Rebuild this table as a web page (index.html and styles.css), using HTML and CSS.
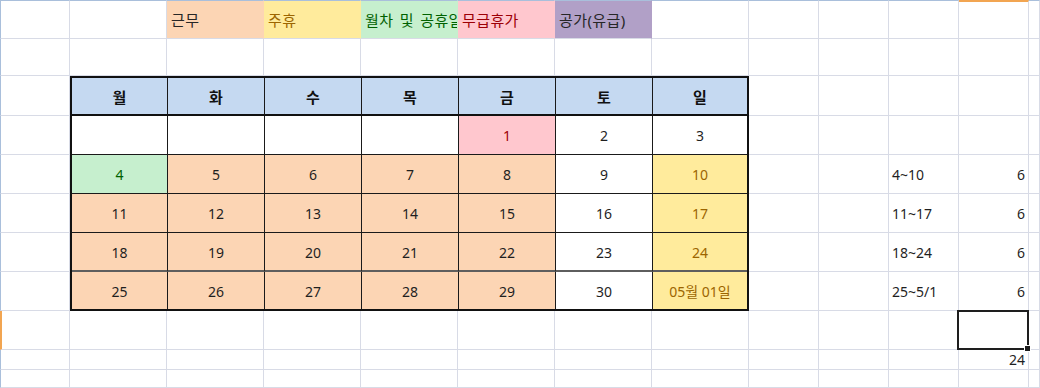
FILE: index.html
```html
<!DOCTYPE html>
<html lang="ko">
<head>
<meta charset="utf-8">
<title>근무표</title>
<link rel="stylesheet" href="styles.css">
</head>
<body>
<div class="sheet">
  <!-- row 1: legend -->
  <div class="cell top lft"></div>
  <div class="cell top"></div>
  <div class="cell top leg work">근무</div>
  <div class="cell top leg rest">주휴</div>
  <div class="cell top leg holiday">월차 및 공휴일</div>
  <div class="cell top leg unpaid">무급휴가</div>
  <div class="cell top leg official">공가(유급)</div>
  <div class="cell top"></div>
  <div class="cell top"></div>
  <div class="cell top"></div>
  <div class="cell top"></div>
  <div class="cell top active-col"></div>
  <div class="cell top"></div>

  <!-- row 2 -->
  <div class="cell lft"></div>
  <div class="cell"></div><div class="cell"></div><div class="cell"></div><div class="cell"></div>
  <div class="cell"></div><div class="cell"></div><div class="cell"></div><div class="cell"></div>
  <div class="cell"></div><div class="cell"></div><div class="cell"></div><div class="cell"></div>

  <!-- calendar table -->
  <div class="cal">
    <div class="hd">월</div><div class="hd">화</div><div class="hd">수</div><div class="hd">목</div><div class="hd">금</div><div class="hd">토</div><div class="hd">일</div>

    <div class="d"></div><div class="d"></div><div class="d"></div><div class="d"></div>
    <div class="d unpaid">1</div><div class="d">2</div><div class="d">3</div>

    <div class="d holiday">4</div><div class="d work">5</div><div class="d work">6</div><div class="d work">7</div>
    <div class="d work">8</div><div class="d">9</div><div class="d rest">10</div>

    <div class="d work">11</div><div class="d work">12</div><div class="d work">13</div><div class="d work">14</div>
    <div class="d work">15</div><div class="d">16</div><div class="d rest">17</div>

    <div class="d work">18</div><div class="d work">19</div><div class="d work">20</div><div class="d work">21</div>
    <div class="d work">22</div><div class="d">23</div><div class="d rest">24</div>

    <div class="d work">25</div><div class="d work">26</div><div class="d work">27</div><div class="d work">28</div>
    <div class="d work">29</div><div class="d">30</div><div class="d rest">05월 01일</div>
  </div>

  <!-- rows 3-8 (beside the table) -->
  <div class="cell lft"></div><div class="cell"></div><div class="cell"></div><div class="cell"></div><div class="cell"></div><div class="cell"></div>
  <div class="cell lft"></div><div class="cell"></div><div class="cell"></div><div class="cell"></div><div class="cell"></div><div class="cell"></div>
  <div class="cell lft"></div><div class="cell"></div><div class="cell"></div><div class="cell txt">4~10</div><div class="cell num">6</div><div class="cell"></div>
  <div class="cell lft"></div><div class="cell"></div><div class="cell"></div><div class="cell txt">11~17</div><div class="cell num">6</div><div class="cell"></div>
  <div class="cell lft"></div><div class="cell"></div><div class="cell"></div><div class="cell txt">18~24</div><div class="cell num">6</div><div class="cell"></div>
  <div class="cell lft"></div><div class="cell"></div><div class="cell"></div><div class="cell txt">25~5/1</div><div class="cell num">6</div><div class="cell"></div>

  <!-- row 9 (selected row) -->
  <div class="cell lft active-row"></div>
  <div class="cell"></div><div class="cell"></div><div class="cell"></div><div class="cell"></div>
  <div class="cell"></div><div class="cell"></div><div class="cell"></div><div class="cell"></div>
  <div class="cell"></div><div class="cell"></div><div class="cell selected"></div><div class="cell"></div>

  <!-- row 10 -->
  <div class="cell lft"></div>
  <div class="cell"></div><div class="cell"></div><div class="cell"></div><div class="cell"></div>
  <div class="cell"></div><div class="cell"></div><div class="cell"></div><div class="cell"></div>
  <div class="cell"></div><div class="cell"></div><div class="cell num">24</div><div class="cell"></div>

  <!-- row 11 -->
  <div class="cell lft"></div>
  <div class="cell"></div><div class="cell"></div><div class="cell"></div><div class="cell"></div>
  <div class="cell"></div><div class="cell"></div><div class="cell"></div><div class="cell"></div>
  <div class="cell"></div><div class="cell"></div><div class="cell"></div><div class="cell"></div>
</div>
</body>
</html>
```

FILE: styles.css
```css
* {
  box-sizing: border-box;
}

html, body {
  margin: 0;
  padding: 0;
  background: #ffffff;
}

body {
  width: 1040px;
  height: 388px;
  overflow: hidden;
  font-family: "Noto Sans", "Noto Sans CJK KR", sans-serif;
  font-size: 14px;
  color: #1f1f1f;
}

.sheet {
  display: grid;
  grid-template-columns: 70px repeat(7, 97px) repeat(4, 70px) 11px;
  grid-template-rows: 39px 37px 40px repeat(5, 39px) 39px 20px 18px;
  width: 1040px;
}

.cell {
  border-right: 1px solid #d8dbe6;
  border-bottom: 1px solid #d8dbe6;
  display: flex;
  align-items: center;
  white-space: nowrap;
  overflow: hidden;
  min-width: 0;
}

.cell.top {
  border-top: 1px solid #a9bfdb;
}

.cell.top.active-col {
  border-top: 2px solid #f2a551;
}

.cell.lft {
  border-left: 1px solid #a9bfdb;
}

.cell.lft.active-row {
  border-left: 2px solid #f2a551;
}

/* legend */
.leg {
  padding-left: 4px;
  padding-top: 1px;
  border-right-color: transparent;
  line-height: 1;
  font-size: 15px;
  letter-spacing: 0.4px;
  word-spacing: 2px;
}

.work {
  background: #fcd5b4;
}

.rest {
  background: #ffeb9c;
  color: #9c6500;
}

.holiday {
  background: #c6efce;
  color: #006100;
}

.unpaid {
  background: #ffc7ce;
  color: #9c0006;
}

.official {
  background: #b1a0c7;
  color: #262626;
}

.leg.work {
  color: #262626;
}

/* right side summary */
.txt {
  padding-left: 3px;
}

.num {
  justify-content: flex-end;
  padding-right: 3px;
}

/* selected cell */
.selected {
  position: relative;
  overflow: visible;
}

.selected::after {
  content: "";
  position: absolute;
  left: -2px;
  top: -1px;
  right: -1px;
  bottom: -1px;
  border: 2px solid #1e1e1e;
  pointer-events: none;
}

.selected::before {
  content: "";
  position: absolute;
  right: -3px;
  bottom: -3px;
  width: 5px;
  height: 5px;
  background: #1e1e1e;
  border: 1px solid #ffffff;
  z-index: 2;
}

/* calendar */
.cal {
  grid-column: 2 / 9;
  grid-row: 3 / 9;
  display: grid;
  grid-template-columns: 96px repeat(5, 97px) 94px;
  grid-template-rows: 38px repeat(4, 39px) 37px;
  border: 2px solid #111111;
  background: #ffffff;
}

.cal > div {
  display: flex;
  align-items: center;
  justify-content: center;
  border-right: 1px solid #1a1a1a;
  border-bottom: 1px solid #1a1a1a;
  white-space: nowrap;
}

.cal > div:nth-child(7n) {
  border-right: none;
}

.cal > div:nth-child(n+36) {
  border-bottom: none;
}

.cal > div:nth-child(n+29):nth-child(-n+35) {
  border-bottom: 2px solid #5e5e5e;
}

.cal .hd {
  background: #c5d9f1;
  font-weight: 700;
  font-size: 15px;
  color: #111111;
  border-bottom: 2px solid #111111;
}

.cal .d {
  padding-top: 1px;
}
```
